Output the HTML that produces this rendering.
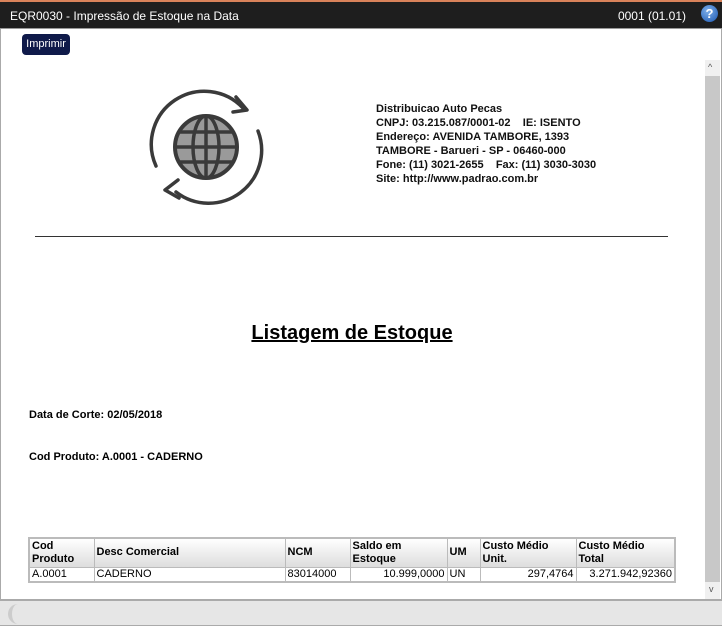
<!DOCTYPE html>
<html><head><meta charset="utf-8"><style>
*{margin:0;padding:0;box-sizing:border-box}
body{width:722px;height:626px;overflow:hidden;background:#fff;font-family:"Liberation Sans",Arial,sans-serif;position:relative}
.top{position:absolute;left:0;top:0;width:722px;height:29px;background:#1e1e1e;border-top:2px solid #d9825a;border-bottom:1px solid #999;color:#fff;font-size:12px}
.top .t{position:absolute;left:10px;top:7px}
.top .r{position:absolute;right:36px;top:7px}
.help{position:absolute;right:4px;top:3px;width:17px;height:17px;border-radius:50%;background:radial-gradient(circle at 40% 35%,#7fb0ea,#1a56b0);color:#fff;font-weight:bold;font-size:13px;text-align:center;line-height:17px}
.btn{position:absolute;left:22px;top:34px;width:48px;height:21px;background:#0f1a4a;color:#fff;border-radius:4px;font-size:11px;text-align:center;line-height:21px}
.frame{position:absolute;left:0;top:29px;width:722px;height:597px;border-left:1px solid #aaa;border-right:1px solid #aaa}
.sb{position:absolute;left:705px;top:60px;width:15px;height:540px;background:#f0f0f0}
.thumb{position:absolute;left:705px;top:76px;width:15px;height:506px;background:#c8c8c8}
.foot{position:absolute;left:0;top:599px;width:722px;height:27px;background:#e6e6e6;border-top:2px solid #aaa;border-bottom:1px solid #aaa}
.co{position:absolute;left:376px;top:102px;font-size:11px;font-weight:bold;line-height:14px;color:#111}
.hr{position:absolute;left:35px;top:236px;width:633px;height:1px;background:#333}
.title{position:absolute;left:0;width:704px;top:322px;text-align:center;font-size:20px;font-weight:bold;text-decoration:underline}
.lab{position:absolute;left:29px;font-size:11px;font-weight:bold}
table{position:absolute;left:28px;top:537px;width:648px;border-collapse:collapse;font-size:11px;border:2px solid #bbb}
th{background:linear-gradient(#fff,#ddd);text-align:left;font-weight:bold;border:1px solid #bbb;padding:0 2px;height:29px;line-height:13px;vertical-align:middle}
td{border:1px solid #bbb;padding:0 2px;height:15px}
</style></head><body>
<div class="frame"></div>
<div class="top"><span class="t">EQR0030 - Impressão de Estoque na Data</span><span class="r">0001 (01.01)</span><div class="help">?</div></div>
<div class="btn">Imprimir</div>
<div class="sb"></div><div class="thumb"></div>
<div style="position:absolute;left:708px;top:62px;font-size:9px;color:#555">&#94;</div>
<div style="position:absolute;left:709px;top:584px;font-size:9px;color:#555">v</div>
<svg style="position:absolute;left:146px;top:86px" width="120" height="124" viewBox="0 0 120 124">
<g fill="none" stroke="#3a3a3a" stroke-width="3.5" stroke-linecap="round" stroke-linejoin="round">
<path d="M10 80 A53 53 0 0 1 97 22"/>
<path d="M90 11 L101 24 L87 26"/>
<path d="M112 45 A53 53 0 0 1 30 106"/>
<path d="M32 94 L19 104 L33 112"/>
</g>
<circle cx="60" cy="61" r="31" fill="#9a9a9a" stroke="#3a3a3a" stroke-width="4"/>
<g fill="none" stroke="#3a3a3a" stroke-width="3.5">
<ellipse cx="60" cy="61" rx="13" ry="31"/>
<line x1="60" y1="30" x2="60" y2="92"/>
<line x1="29" y1="61" x2="91" y2="61"/>
<line x1="34" y1="46" x2="86" y2="46"/>
<line x1="34" y1="76" x2="86" y2="76"/>
</g></svg>
<div class="co">Distribuicao Auto Pecas<br>CNPJ: 03.215.087/0001-02&nbsp;&nbsp;&nbsp; IE: ISENTO<br>Endereço: AVENIDA TAMBORE, 1393<br>TAMBORE - Barueri - SP - 06460-000<br>Fone: (11) 3021-2655&nbsp;&nbsp;&nbsp; Fax: (11) 3030-3030<br>Site: http://www.padrao.com.br</div>
<div class="hr"></div>
<div class="title">Listagem de Estoque</div>
<div class="lab" style="top:409px">Data de Corte: 02/05/2018</div>
<div class="lab" style="top:451px">Cod Produto: A.0001 - CADERNO</div>
<table>
<tr><th style="width:65px">Cod<br>Produto</th><th style="width:191px">Desc Comercial</th><th style="width:65px">NCM</th><th style="width:97px">Saldo em<br>Estoque</th><th style="width:33px">UM</th><th style="width:96px">Custo Médio<br>Unit.</th><th>Custo Médio<br>Total</th></tr>
<tr><td>A.0001</td><td>CADERNO</td><td>83014000</td><td style="text-align:right">10.999,0000</td><td>UN</td><td style="text-align:right">297,4764</td><td style="text-align:right">3.271.942,92360</td></tr>
</table>
<div class="foot"><div style="position:absolute;left:8px;top:3px;width:20px;height:20px;border-radius:50%;border-left:4px solid #ccc"></div></div>
</body></html>
